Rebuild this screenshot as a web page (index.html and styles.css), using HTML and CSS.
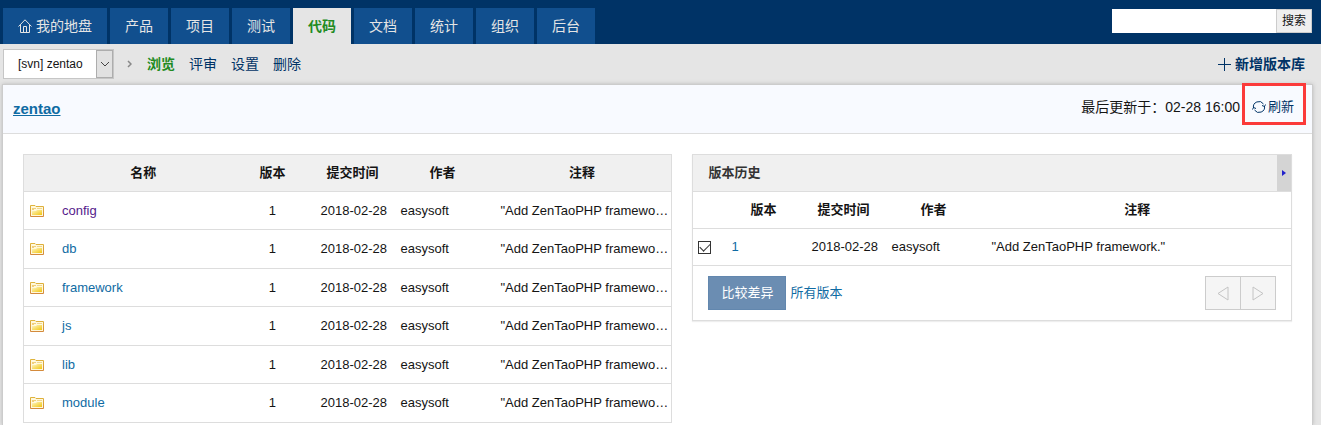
FILE: index.html
```html
<!DOCTYPE html>
<html lang="zh-CN">
<head>
    <meta charset="UTF-8">
    <meta name="viewport" content="width=device-width, initial-scale=1.0">
    <title>zentao</title>
    <link rel="stylesheet" href="styles.css">
</head>
<body>
    <svg class="sprite" aria-hidden="true">
        <defs>
            <linearGradient id="fill" x1="0" y1="0" x2="1" y2="1">
                <stop offset="0" stop-color="#fdf6c8"/>
                <stop offset="1" stop-color="#f2c60f"/>
            </linearGradient>
            <linearGradient id="edge" x1="0" y1="0" x2="0" y2="1">
                <stop offset="0" stop-color="#dfb43c"/>
                <stop offset="1" stop-color="#d48a3c"/>
            </linearGradient>
        </defs>
        <symbol id="folder" viewBox="0 0 14 12">
            <path d="M.5 11.500V.5H5L6 1.500H13.500V11.500Z" fill="#fff8dc" stroke="url(#edge)"/>
            <path d="M2 10V6h4l1-1h5v5z" fill="url(#fill)"/>
            <path d="M2 3h4v1H4v1H2z" fill="#f0cf7a"/>
            <path d="M7 3.500h5" fill="none" stroke="#f0d78e"/>
        </symbol>
    </svg>

    <header class="header">
        <nav class="tabs">
            <a href="#">
                <svg class="home" viewBox="0 0 14 14"><path d="M.5 7.500 7 .8l6.500 6.700M2.500 6v7.500h9V6M5.500 13.500v-6h3v6" fill="none" stroke="currentColor"/></svg>我的地盘</a>
            <a href="#">产品</a>
            <a href="#">项目</a>
            <a href="#">测试</a>
            <a href="#" class="active">代码</a>
            <a href="#">文档</a>
            <a href="#">统计</a>
            <a href="#">组织</a>
            <a href="#">后台</a>
        </nav>
        <form class="search">
            <input type="text" aria-label="搜索">
            <button type="button">搜索</button>
        </form>
    </header>

    <div class="subbar">
        <div class="repo">
            <select aria-label="版本库">
                <option>[svn] zentao</option>
            </select>
            <span class="arrow"><svg viewBox="0 0 10 6"><path d="M1 1l4 4 4-4" fill="none" stroke="currentColor"/></svg></span>
        </div>
        <svg class="sep" viewBox="0 0 5 8"><path d="M1 1l3 3-3 3" fill="none" stroke="currentColor" stroke-width="1.500"/></svg>
        <nav class="submenu">
            <a href="#" class="active">浏览</a>
            <a href="#">评审</a>
            <a href="#">设置</a>
            <a href="#">删除</a>
        </nav>
        <a href="#" class="create">
            <svg viewBox="0 0 13 13"><path d="M6.500 0v13M0 6.500h13" stroke="currentColor"/></svg>新增版本库</a>
    </div>

    <main class="panel">
        <div class="titlebar">
            <a href="#" class="title">zentao</a>
            <div class="updated">
                <span>最后更新于&#65306;02-28 16:00</span>
                <a href="#" class="refresh">
                    <svg viewBox="0 0 14 14"><path d="M1.500 8A5.500 5.500 0 0 1 11.500 4M12.500 6A5.500 5.500 0 0 1 2.500 10M13.500 4.500 12.500 6.500 10 5.500M.5 9.500 1.500 7.500 4 8.500" fill="none" stroke="currentColor"/></svg>刷新</a>
            </div>
        </div>

        <div class="columns">
            <table class="files">
                <thead>
                    <tr>
                        <th class="mark"></th>
                        <th>名称</th>
                        <th class="rev">版本</th>
                        <th class="date">提交时间</th>
                        <th class="author">作者</th>
                        <th class="comment">注释</th>
                    </tr>
                </thead>
                <tbody>
                    <tr>
                        <td class="mark"><svg class="folder"><use href="#folder"/></svg></td>
                        <td><a href="#" class="visited">config</a></td>
                        <td class="rev">1</td>
                        <td>2018-02-28</td>
                        <td>easysoft</td>
                        <td>"Add ZenTaoPHP framewo…</td>
                    </tr>
                    <tr>
                        <td class="mark"><svg class="folder"><use href="#folder"/></svg></td>
                        <td><a href="#">db</a></td>
                        <td class="rev">1</td>
                        <td>2018-02-28</td>
                        <td>easysoft</td>
                        <td>"Add ZenTaoPHP framewo…</td>
                    </tr>
                    <tr>
                        <td class="mark"><svg class="folder"><use href="#folder"/></svg></td>
                        <td><a href="#">framework</a></td>
                        <td class="rev">1</td>
                        <td>2018-02-28</td>
                        <td>easysoft</td>
                        <td>"Add ZenTaoPHP framewo…</td>
                    </tr>
                    <tr>
                        <td class="mark"><svg class="folder"><use href="#folder"/></svg></td>
                        <td><a href="#">js</a></td>
                        <td class="rev">1</td>
                        <td>2018-02-28</td>
                        <td>easysoft</td>
                        <td>"Add ZenTaoPHP framewo…</td>
                    </tr>
                    <tr>
                        <td class="mark"><svg class="folder"><use href="#folder"/></svg></td>
                        <td><a href="#">lib</a></td>
                        <td class="rev">1</td>
                        <td>2018-02-28</td>
                        <td>easysoft</td>
                        <td>"Add ZenTaoPHP framewo…</td>
                    </tr>
                    <tr>
                        <td class="mark"><svg class="folder"><use href="#folder"/></svg></td>
                        <td><a href="#">module</a></td>
                        <td class="rev">1</td>
                        <td>2018-02-28</td>
                        <td>easysoft</td>
                        <td>"Add ZenTaoPHP framewo…</td>
                    </tr>
                </tbody>
            </table>

            <section class="history">
                <div class="history-head">
                    <h2>版本历史</h2>
                    <button type="button" class="fold" aria-label="收起"><svg viewBox="0 0 4 6"><path d="M0 0l4 3-4 3z" fill="currentColor"/></svg></button>
                </div>
                <table>
                    <thead>
                        <tr>
                            <th class="mark"></th>
                            <th class="rev">版本</th>
                            <th class="date">提交时间</th>
                            <th class="author">作者</th>
                            <th>注释</th>
                        </tr>
                    </thead>
                    <tbody>
                        <tr>
                            <td class="mark"><input type="checkbox" aria-label="版本 1" checked></td>
                            <td><a href="#">1</a></td>
                            <td>2018-02-28</td>
                            <td>easysoft</td>
                            <td>"Add ZenTaoPHP framework."</td>
                        </tr>
                    </tbody>
                </table>
                <div class="history-foot">
                    <button type="button" class="diff">比较差异</button>
                    <a href="#">所有版本</a>
                    <div class="pager">
                        <button type="button" aria-label="上一页"><svg viewBox="0 0 12 15"><path d="M11 1v13L1 7.500z" fill="none" stroke="currentColor"/></svg></button>
                        <button type="button" aria-label="下一页"><svg viewBox="0 0 12 15"><path d="M1 1v13l10-6.500z" fill="none" stroke="currentColor"/></svg></button>
                    </div>
                </div>
            </section>
        </div>
    </main>
</body>
</html>
```
FILE: styles.css
```css
* {
    box-sizing: border-box;
}

body {
    display: flex;
    flex-direction: column;
    min-height: 100vh;
    margin: 0;
    background-color: #e5e5e5;
    color: #141414;
    font-family: "Liberation Sans", "Noto Sans CJK SC", sans-serif;
    font-size: 13px;
    line-height: 20px;
}

a {
    color: #036;
    text-decoration: none;
}

button,
input,
select {
    font: inherit;
    color: inherit;
    margin: 0;
    border-radius: 0;
}

svg {
    flex: none;
}

.sprite {
    position: absolute;
    width: 0;
    height: 0;
}

/* top navigation */
.header {
    display: flex;
    justify-content: space-between;
    height: 44px;
    padding: 8px 9px 0 3px;
    background-color: #036;
}

.tabs {
    display: flex;
    gap: 3px;
    font-size: 14px;
}

.tabs a {
    display: flex;
    align-items: center;
    gap: 4px;
    padding: 0 15px;
    background-color: #114f8e;
    color: #e5e5e5;
}

.tabs .active {
    background-color: #e5e5e5;
    color: #228b22;
    font-weight: bold;
}

.home {
    width: 14px;
    height: 14px;
}

.search {
    display: flex;
    height: 24px;
    margin-top: 1px;
}

.search input {
    width: 164px;
    border: 1px solid #fff;
    background-color: #fff;
}

.search button {
    padding: 0 5px;
    border: 1px solid #ccc;
    background-color: #efefef;
    font-size: 12px;
    line-height: 20px;
}

/* sub navigation */
.subbar {
    display: flex;
    align-items: center;
    height: 40px;
    padding: 0 16px 0 3px;
    font-size: 14px;
}

.repo {
    position: relative;
    font-size: 12px;
}

.repo select {
    appearance: none;
    display: block;
    width: 111px;
    height: 30px;
    padding: 0 14px;
    border: 1px solid #c6c6c6;
    background-color: #fff;
}

.arrow {
    position: absolute;
    top: 1px;
    right: 1px;
    bottom: 1px;
    width: 17px;
    display: flex;
    align-items: center;
    justify-content: center;
    border: 1px solid #adadad;
    background-color: #e1e1e1;
    color: #444;
    pointer-events: none;
}

.arrow svg {
    width: 10px;
    height: 6px;
}

.sep {
    width: 5px;
    height: 8px;
    margin: 0 15px 0 13px;
    color: #888;
}

.submenu {
    display: flex;
    gap: 14px;
}

.submenu .active {
    color: #228b22;
    font-weight: bold;
}

.create {
    display: flex;
    align-items: center;
    gap: 4px;
    margin-left: auto;
    font-weight: bold;
}

.create svg {
    width: 13px;
    height: 13px;
}

/* main panel */
.panel {
    flex: 1;
    margin: 0 8px 0 2px;
    border: 1px solid #ccc;
    border-bottom: 0;
    background-color: #fff;
    box-shadow: 0 0 4px #bbb;
}

.titlebar {
    display: flex;
    align-items: center;
    justify-content: space-between;
    height: 49px;
    padding: 0 18px 0 10px;
    border-bottom: 1px solid #ddd;
    background-color: #f8faff;
}

.title {
    color: #0f6ba3;
    font-size: 15px;
    font-weight: bold;
    text-decoration: underline;
}

.updated {
    display: flex;
    align-items: center;
    gap: 12px;
    padding-bottom: 4px;
    font-size: 14px;
}

.refresh {
    position: relative;
    display: flex;
    align-items: center;
    gap: 2px;
    font-size: 13px;
}

.refresh svg {
    width: 14px;
    height: 14px;
}

/* red frame around the refresh link */
.refresh::after {
    content: "";
    position: absolute;
    inset: -14px -12px -8px -10px;
    border: 3px solid #fb3a3a;
}

.columns {
    display: grid;
    grid-template-columns: 13fr 12fr;
    align-items: start;
    gap: 20px;
    padding: 20px 20px 0;
}

table {
    width: 100%;
    table-layout: fixed;
    border-collapse: separate;
    border-spacing: 0;
}

tr {
    height: 37px;
}

th,
td {
    padding: 0 0 0 8px;
    border-bottom: 1px solid #ddd;
    overflow: hidden;
    text-align: left;
    text-overflow: ellipsis;
    white-space: nowrap;
}

th {
    padding: 0;
    text-align: center;
}

td a,
.history-foot a {
    color: #0f6ba3;
}

td .visited {
    color: #551a8b;
}

.mark {
    width: 30px;
    padding: 0 0 0 6px;
}

.rev {
    width: 80px;
}

.date {
    width: 80px;
}

.author {
    width: 100px;
}

.comment {
    width: 179px;
}

.files {
    border: 1px solid #ddd;
    border-bottom: 0;
}

.files thead {
    background-color: #f0f0f0;
}

.files tbody tr {
    height: 38px;
}

.files tbody tr:nth-child(even) {
    height: 39px;
}

.files .rev {
    padding: 0;
    text-align: center;
}

.folder {
    display: block;
    width: 14px;
    height: 12px;
}

/* revision history */
.history {
    border: 1px solid #ddd;
    box-shadow: 0 1px 1px #eee;
}

.history-head {
    display: flex;
    align-items: center;
    justify-content: space-between;
    height: 37px;
    padding-left: 15px;
    border-bottom: 1px solid #ddd;
    background-color: #f0f0f0;
}

.history-head h2 {
    margin: 0;
    color: #333;
    font-size: 13px;
    font-weight: bold;
}

.fold {
    display: flex;
    align-items: center;
    justify-content: center;
    width: 14px;
    height: 36px;
    padding: 0;
    border: 0;
    background-color: #d4d4d4;
    color: #22c;
}

.fold svg {
    width: 4px;
    height: 6px;
}

.history .mark {
    padding-left: 5px;
}

.history input {
    appearance: none;
    display: grid;
    place-content: center;
    width: 13px;
    height: 13px;
    border: 1px solid #333;
    background-color: #fff;
}

.history input:checked::after {
    content: "";
    width: 9px;
    height: 5px;
    margin-bottom: 3px;
    border: solid #333;
    border-width: 0 0 1px 1px;
    transform: rotate(-45deg);
}

.history-foot {
    display: flex;
    align-items: center;
    gap: 4px;
    padding: 10px 15px;
}

.diff {
    height: 34px;
    padding: 0 12px;
    border: 1px solid #6287ae;
    background-color: #6b8db2;
    color: #fff;
}

.pager {
    display: flex;
    margin-left: auto;
}

.pager button {
    display: flex;
    align-items: center;
    justify-content: center;
    width: 36px;
    height: 34px;
    padding: 0;
    border: 1px solid #ccc;
    background-color: #f5f5f5;
    color: #c4c4c4;
}

.pager button + button {
    margin-left: -1px;
}

.pager svg {
    width: 12px;
    height: 15px;
}
```
